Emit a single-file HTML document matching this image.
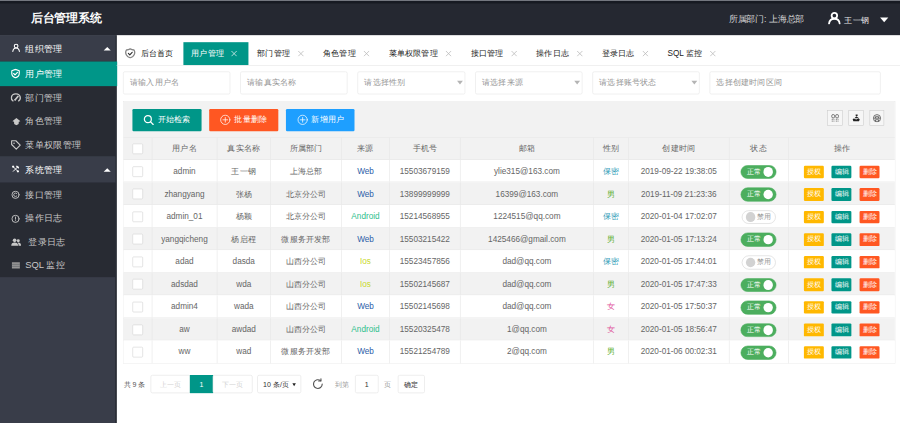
<!DOCTYPE html>
<html lang="zh">
<head>
<meta charset="utf-8">
<title>后台管理系统</title>
<style>
*{box-sizing:border-box;margin:0;padding:0}
html,body{width:900px;height:423px;overflow:hidden;background:#fff}
body{font-family:"Liberation Sans",sans-serif;font-size:14px;color:#333;position:relative}
#app{position:absolute;left:0;top:0;width:1536px;height:722px;transform:scale(0.5859375);transform-origin:0 0;overflow:hidden;background:#fff}
a{text-decoration:none;color:inherit}
i,em{font-style:normal}
svg{display:block}
/* header */
.hd{position:absolute;left:0;top:0;width:1536px;height:60px;background:linear-gradient(to bottom,#74777f 0,#74777f 1.5px,#171a22 2.2px,#171a22 5px,#252831 7px,#252831 100%);color:#fff}
.logo{position:absolute;left:53px;top:0;height:60px;line-height:63px;font-size:20px;font-weight:bold;color:#fff;white-space:nowrap}
.dept{position:absolute;left:1244px;top:0;line-height:66px;font-size:15px;color:#d4d4d4;white-space:nowrap}
.uic{position:absolute;left:1413px;top:19.5px;width:22px;height:22px}
.uname{position:absolute;left:1441px;top:0;line-height:70px;font-size:14px;color:#e8e8e8;white-space:nowrap}
.ucar{position:absolute;left:1501.5px;top:29.5px;width:0;height:0;border:7.3px solid transparent;border-top:8px solid #fff;border-bottom-width:0}
/* side */
.side{position:absolute;left:0;top:60px;width:198.7px;height:662px;background:#393d49;border-right:2px solid #20232a;color:#c2c2c2;font-size:16px}
.side .g{position:relative;height:45px;line-height:47px;color:#fff;background:#393d49;border-bottom:1.5px solid #2b2e37}
.side .it{position:relative;height:40px;line-height:40px;color:#c8c8c8}
.side .grp .it:first-child{height:41.5px;line-height:41.5px}
.side .grp{background:#282b33}
.side .it.on{background:#009688;color:#fff;margin-right:-3.2px}
.side .t{position:absolute;left:43px;top:0;white-space:nowrap}
.side .ic{position:absolute;left:19px;top:50%;width:16px;height:16px;margin-top:-8px}
.side .car{position:absolute;left:177px;top:20px;width:0;height:0;border:6.5px solid transparent;border-bottom-color:#fff;border-top-width:0}
/* tabs */
.tabs{position:absolute;left:199px;top:72.4px;width:1337px;height:39.6px;border-bottom:1px solid #e6e6e6;white-space:nowrap;font-size:14px;color:#222}
.tab{position:absolute;top:0;height:38.6px;line-height:38.6px;white-space:nowrap}
.tab.on{background:#009688;color:#fff}
.tab .x{position:absolute;top:13.8px;width:11px;height:11px;stroke:#b8b8b8}
.tab.on .x{stroke:#e6f5f3}
/* inputs */
.inp{position:absolute;top:121.5px;height:39.4px;border:1px solid #e6e6e6;border-radius:3px;background:#fff;line-height:34.4px;padding-left:11px;color:#959595;font-size:14px;white-space:nowrap}
.inp .dn{position:absolute;right:2.6px;top:15.8px;width:0;height:0;border:5.6px solid transparent;border-top:6.2px solid #b4b4b4;border-bottom-width:0}
/* table */
.tbl{position:absolute;left:210.4px;top:173.3px;width:1317.2px;border:1px solid #e9e9e9;background:#fff}
.tool{position:relative;height:60.3px;background:#f2f2f2;border-bottom:1px solid #e6e6e6}
.btn{position:absolute;top:11.9px;height:38px;line-height:38px;color:#fff;font-size:14px;border-radius:2px;white-space:nowrap}
.btn span{position:absolute;top:-1.6px;left:43px}
.btn svg{position:absolute;left:18.5px;top:9px;width:19px;height:19px}
.tic{position:absolute;top:14.2px;width:25.8px;height:26.2px;border:1px solid #ccc;background:#f6f6f6}
.tr{display:flex;height:38.55px;border-bottom:1px solid #e6e6e6;background:#fff}
.tr.ev{background:#f2f2f2}
.tr.th{background:#f2f2f2;height:38.3px}
.tr:last-child{border-bottom:none}
.c{flex:none;height:100%;padding-top:1.2px;border-right:1px solid #e6e6e6;text-align:center;line-height:37.5px;color:#666;font-size:14px;white-space:nowrap;overflow:hidden;position:relative}
.c:last-child{border-right:none}
.th .c{padding-top:.7px}
.chk{display:inline-block;width:18px;height:18px;border:1px solid #d2d2d2;border-radius:2px;background:#fff;vertical-align:middle;position:relative;top:-.7px}
.sw{display:inline-block;position:relative;width:58px;height:23.5px;border-radius:12px;border:1px solid #d2d2d2;background:#fff;vertical-align:middle;top:.2px}
.sw em{position:absolute;top:0;line-height:21.5px;font-size:12px;color:#999;right:6.5px}
.sw i{position:absolute;top:2.5px;left:6px;width:16.5px;height:16.5px;border-radius:50%;background:#d2d2d2}
.sw.on{background:#4cae5e;border-color:#4cae5e;width:61px}
.sw.on em{color:#fff;left:10px;right:auto}
.sw.on i{background:#fff;left:auto;right:5px}
.xb{display:inline-block;height:21.5px;line-height:21.5px;width:34px;color:#fff;font-size:12px;border-radius:2px;vertical-align:middle;margin:0 6.8px;position:relative;top:-.1px;left:-.6px}
/* page */
.pg{position:absolute;top:640.2px;height:31px;font-size:12px;color:#333;white-space:nowrap}
.pg div,.pg span{position:absolute;top:0;height:31px;line-height:32px;text-align:center}
.pg .bx{border:1px solid #e2e2e2;background:#fff;border-radius:3px}
</style>
</head>
<body>
<div id="app">
  <div class="hd">
    <div class="logo">后台管理系统</div>
    <div class="dept">所属部门: 上海总部</div>
    <svg class="uic" viewBox="0 0 22 22" fill="none" stroke="#fff" stroke-width="3.1" stroke-linecap="round"><circle cx="11" cy="6.6" r="4.700"/><path d="M1.900 20.300c0.600-5.400 4.200-8.300 9.100-8.300s8.500 2.900 9.100 8.300"/></svg>
    <div class="uname">王一钢</div>
    <div class="ucar"></div>
  </div>

  <div class="side">
    <div class="g"><svg class="ic" style="width:15px;height:15px;margin-top:-8px;left:19.5px" viewBox="0 0 24 24" fill="none" stroke="#fff" stroke-width="3" stroke-linecap="round"><circle cx="12" cy="7.5" r="5"/><path d="M3 22c0.800-5.800 4.400-9.200 9-9.200s8.200 3.400 9 9.200"/></svg><span class="t">组织管理</span><span class="car"></span></div>
    <div class="grp">
    <div class="it on"><svg class="ic" style="width:17px;height:17px;margin-top:-8.5px;left:18px" viewBox="0 0 24 24" fill="none" stroke="#fff" stroke-width="2.800" stroke-linejoin="round" stroke-linecap="round"><path d="M12 2l9 3.200v6.800c0 5.400-3.800 8.600-9 10.400c-5.200-1.800-9-5-9-10.400v-6.800z"/><path d="M7.500 12l3.300 3.300l5.800-6"/></svg><span class="t">用户管理</span></div>
    <div class="it"><svg class="ic" style="width:18px;height:16px;margin-top:-8.5px;left:18px" viewBox="0 0 24 21" fill="none" stroke="#c8c8c8" stroke-width="3.200" stroke-linecap="round"><path d="M5.500 18.500c-2.400-1.400-3.700-3.800-3.700-6.500c0-5.200 4.500-9.200 10.200-9.200s10.200 4 10.200 9.200c0 2.700-1.300 5.100-3.700 6.500"/><path d="M11 15.500l6-7" stroke-width="3.600"/><circle cx="10.500" cy="16" r="2.200" fill="#c8c8c8" stroke="none"/></svg><span class="t">部门管理</span></div>
    <div class="it"><svg class="ic" style="width:14px;height:13px;margin-top:-6px;left:20.500px" viewBox="0 0 24 22" fill="#c8c8c8"><path d="M12 0.500l12 9.500l-5 1.500l-0.500 6.500l-6.500 3.500l-6.500-3.500l-0.500-6.500l-5-1.500z"/></svg><span class="t">角色管理</span></div>
    <div class="it"><svg class="ic" style="width:18px;height:18px;margin-top:-8.500px;left:17.500px" viewBox="0 0 24 24" fill="none" stroke="#c8c8c8" stroke-width="2.600" stroke-linejoin="round"><path d="M2.500 3h9.500l10 10l-9 9l-10.500-10.500z"/><circle cx="8" cy="8.500" r="1.800" fill="#c8c8c8" stroke="none"/></svg><span class="t">菜单权限管理</span></div>
    </div>
    <div class="g"><svg class="ic" style="width:13px;height:13px;margin-top:-6.500px;left:20px" viewBox="0 0 24 24" fill="none" stroke="#fff" stroke-width="3" stroke-linecap="round"><path d="M5 5l14 14M19 5l-14 14"/><circle cx="4.500" cy="4.500" r="3.400" fill="#fff" stroke="none"/><circle cx="19.500" cy="19.500" r="3.400" fill="#fff" stroke="none"/><path d="M16 3l5 5" stroke-width="4.500"/></svg><span class="t">系统管理</span><span class="car"></span></div>
    <div class="grp">
    <div class="it"><svg class="ic" style="width:15px;height:15px;margin-top:-7.500px;left:19px" viewBox="0 0 24 24" fill="none" stroke="#c8c8c8" stroke-width="2.500" stroke-linecap="round"><circle cx="12" cy="12" r="9.800"/><path d="M15.500 8.800a4.800 4.800 0 1 0 0 6.400"/></svg><span class="t">接口管理</span></div>
    <div class="it"><svg class="ic" style="width:15px;height:15px;margin-top:-7.500px;left:19px" viewBox="0 0 24 24" fill="none" stroke="#c8c8c8" stroke-width="2.500" stroke-linecap="round"><circle cx="12" cy="12" r="9.800"/><path d="M12 7v6M12 17v0.200"/></svg><span class="t">操作日志</span></div>
    <div class="it"><svg class="ic" style="width:17px;height:14px;margin-top:-7.500px;left:18.500px" viewBox="0 0 30 24" fill="#c8c8c8"><circle cx="10.500" cy="7" r="5.500"/><path d="M0 23c0-6.500 4-9.500 10.500-9.500s10.500 3 10.500 9.500z"/><circle cx="21.500" cy="8" r="4.500"/><path d="M21 13.500c5.500 0 9 2.500 9 9.500h-7.500c0-4.500-1-7-3.500-9z"/></svg><span class="t" style="left:48px">登录日志</span></div>
    <div class="it"><svg class="ic" style="width:14px;height:12px;margin-top:-6px;left:19.500px" viewBox="0 0 24 20" fill="#969696"><path d="M0 1h24v18h-24z"/><path d="M0 6.800h24M0 12.800h24" stroke="#55585f" stroke-width="1.500"/></svg><span class="t">SQL 监控</span></div>
    </div>
  </div>

  <div class="tabs">
    <div class="tab" style="left:0;width:114px"><svg style="position:absolute;left:14.2px;top:9.8px;width:18.5px;height:18px" viewBox="0 0 24 24" fill="none" stroke-linejoin="round" stroke-linecap="round"><path d="M12 1.800c2.600 1.600 5.400 2.400 8.600 2.600c2 3.200 2 7.400 0.400 10.800c-1.600 3.400-4.800 5.800-9 7c-4.200-1.200-7.400-3.600-9-7c-1.600-3.400-1.600-7.600 0.400-10.800c3.200-0.200 6-1 8.600-2.600z" stroke="#858585" stroke-width="3"/><path d="M7.800 12.200l3.200 3.200l5.400-5.800" stroke="#2e2e2e" stroke-width="2.600"/></svg><span style="position:absolute;left:41px">后台首页</span></div>
    <div class="tab on" style="left:114px;width:110.500px"><span style="position:absolute;left:13.3px">用户管理</span><svg class="x" style="left:81.2px" viewBox="0 0 11 11" fill="none" stroke-width="1.3"><path d="M1 1l9 9M10 1l-9 9"/></svg></div>
    <div class="tab" style="left:224.500px;width:112px"><span style="position:absolute;left:15.6px">部门管理</span><svg class="x" style="left:84.2px" viewBox="0 0 11 11" fill="none" stroke-width="1.3"><path d="M1 1l9 9M10 1l-9 9"/></svg></div>
    <div class="tab" style="left:336.500px;width:112px"><span style="position:absolute;left:15.6px">角色管理</span><svg class="x" style="left:84.2px" viewBox="0 0 11 11" fill="none" stroke-width="1.3"><path d="M1 1l9 9M10 1l-9 9"/></svg></div>
    <div class="tab" style="left:448.500px;width:140px"><span style="position:absolute;left:15.6px">菜单权限管理</span><svg class="x" style="left:112.2px" viewBox="0 0 11 11" fill="none" stroke-width="1.3"><path d="M1 1l9 9M10 1l-9 9"/></svg></div>
    <div class="tab" style="left:588.500px;width:112px"><span style="position:absolute;left:15.6px">接口管理</span><svg class="x" style="left:84.2px" viewBox="0 0 11 11" fill="none" stroke-width="1.3"><path d="M1 1l9 9M10 1l-9 9"/></svg></div>
    <div class="tab" style="left:700.500px;width:112px"><span style="position:absolute;left:15.6px">操作日志</span><svg class="x" style="left:84.2px" viewBox="0 0 11 11" fill="none" stroke-width="1.3"><path d="M1 1l9 9M10 1l-9 9"/></svg></div>
    <div class="tab" style="left:812.500px;width:112px"><span style="position:absolute;left:15.6px">登录日志</span><svg class="x" style="left:84.2px" viewBox="0 0 11 11" fill="none" stroke-width="1.3"><path d="M1 1l9 9M10 1l-9 9"/></svg></div>
    <div class="tab" style="left:924.500px;width:112px"><span style="position:absolute;left:15.6px">SQL 监控</span><svg class="x" style="left:87.5px" viewBox="0 0 11 11" fill="none" stroke-width="1.3"><path d="M1 1l9 9M10 1l-9 9"/></svg></div>
  </div>

  <div class="inp" style="left:210px;width:182.500px">请输入用户名</div>
  <div class="inp" style="left:410px;width:182.500px">请输真实名称</div>
  <div class="inp" style="left:610px;width:183.500px">请选择性别<i class="dn"></i></div>
  <div class="inp" style="left:810.500px;width:183px">请选择来源<i class="dn"></i></div>
  <div class="inp" style="left:1010.500px;width:183px">请选择账号状态<i class="dn"></i></div>
  <div class="inp" style="left:1210.500px;width:292px">选择创建时间区间</div>

  <div class="tbl">
    <div class="tool">
      <a class="btn" style="left:14.500px;width:118px;background:#009688"><svg viewBox="0 0 24 24" fill="none" stroke="#fff" stroke-width="2.600" stroke-linecap="round"><circle cx="10.500" cy="10.500" r="7.500"/><path d="M16 16l6 6"/></svg><span>开始检索</span></a>
      <a class="btn" style="left:145.500px;width:118px;background:#FF5722"><svg viewBox="0 0 24 24" fill="none" stroke="#fff" stroke-width="1.600" stroke-linecap="round"><circle cx="12" cy="12" r="10"/><path d="M12 7v10M7 12h10"/></svg><span>批量删除</span></a>
      <a class="btn" style="left:277px;width:117px;background:#1E9FFF"><svg viewBox="0 0 24 24" fill="none" stroke="#fff" stroke-width="1.600" stroke-linecap="round"><circle cx="12" cy="12" r="10"/><path d="M12 7v10M7 12h10"/></svg><span>新增用户</span></a>
      <div class="tic" style="left:1200.5px"><svg style="position:absolute;left:5px;top:5px;width:14.500px;height:14.500px" viewBox="0 0 24 24" fill="none" stroke="#555" stroke-width="2.200"><rect x="2.500" y="2.500" width="8" height="9.500" rx="3.500"/><rect x="13.500" y="2.500" width="8" height="9.500" rx="3.500"/><path d="M2.500 16h7.500M14 16h7.500M2.500 21h7.500M14 21h7.500" stroke-dasharray="3 2"/></svg></div>
      <div class="tic" style="left:1236.5px"><svg style="position:absolute;left:5px;top:5px;width:14.500px;height:14.500px" viewBox="0 0 24 24" fill="#222"><path d="M10.500 2.500h5.500v4h-5.500zM12.500 7l7.500 6h-13zM2 15.500l3-2l7 3l7-3l3 2l-2 6h-16z"/></svg></div>
      <div class="tic" style="left:1272.3px"><svg style="position:absolute;left:4.500px;top:4.500px;width:15.500px;height:15.500px" viewBox="0 0 24 24" fill="none" stroke="#555" stroke-width="2.200"><circle cx="12" cy="12" r="9.500"/><path d="M4 12h16M8 12v-4h8v4M8 21v-5h8v5"/></svg></div>
    </div>
    <div class="tr th"><div class="c" style="width:48.47px"><span class="chk"></span></div><div class="c" style="width:110.93px">用户名</div><div class="c" style="width:91.48px">真实名称</div><div class="c" style="width:121.17px">所属部门</div><div class="c" style="width:81.75px">来源</div><div class="c" style="width:120.83px">手机号</div><div class="c" style="width:227.50px">邮箱</div><div class="c" style="width:59.73px">性别</div><div class="c" style="width:171.35px">创建时间</div><div class="c" style="width:101.21px">状态</div><div class="c" style="width:182.61px">操作</div></div>
    <div class="tr"><div class="c" style="width:48.47px"><span class="chk"></span></div><div class="c" style="width:110.93px">admin</div><div class="c" style="width:91.48px">王一钢</div><div class="c" style="width:121.17px">上海总部</div><div class="c" style="width:81.75px"><span style="color:#2c5ea8">Web</span></div><div class="c" style="width:120.83px">15503679159</div><div class="c" style="width:227.50px">ylie315@163.com</div><div class="c" style="width:59.73px"><span style="color:#2f9db8">保密</span></div><div class="c" style="width:171.35px">2019-09-22 19:38:05</div><div class="c" style="width:101.21px"><span class="sw on"><em>正常</em><i></i></span></div><div class="c" style="width:182.61px"><a class="xb" style="background:#FFB800">授权</a><a class="xb" style="background:#009688">编辑</a><a class="xb" style="background:#FF5722">删除</a></div></div>
<div class="tr ev"><div class="c" style="width:48.47px"><span class="chk"></span></div><div class="c" style="width:110.93px">zhangyang</div><div class="c" style="width:91.48px">张杨</div><div class="c" style="width:121.17px">北京分公司</div><div class="c" style="width:81.75px"><span style="color:#2c5ea8">Web</span></div><div class="c" style="width:120.83px">13899999999</div><div class="c" style="width:227.50px">16399@163.com</div><div class="c" style="width:59.73px"><span style="color:#5db030">男</span></div><div class="c" style="width:171.35px">2019-11-09 21:23:36</div><div class="c" style="width:101.21px"><span class="sw on"><em>正常</em><i></i></span></div><div class="c" style="width:182.61px"><a class="xb" style="background:#FFB800">授权</a><a class="xb" style="background:#009688">编辑</a><a class="xb" style="background:#FF5722">删除</a></div></div>
<div class="tr"><div class="c" style="width:48.47px"><span class="chk"></span></div><div class="c" style="width:110.93px">admin_01</div><div class="c" style="width:91.48px">杨颖</div><div class="c" style="width:121.17px">北京分公司</div><div class="c" style="width:81.75px"><span style="color:#2fc08d">Android</span></div><div class="c" style="width:120.83px">15214568955</div><div class="c" style="width:227.50px">1224515@qq.com</div><div class="c" style="width:59.73px"><span style="color:#2f9db8">保密</span></div><div class="c" style="width:171.35px">2020-01-04 17:02:07</div><div class="c" style="width:101.21px"><span class="sw"><i></i><em>禁用</em></span></div><div class="c" style="width:182.61px"><a class="xb" style="background:#FFB800">授权</a><a class="xb" style="background:#009688">编辑</a><a class="xb" style="background:#FF5722">删除</a></div></div>
<div class="tr ev"><div class="c" style="width:48.47px"><span class="chk"></span></div><div class="c" style="width:110.93px">yangqicheng</div><div class="c" style="width:91.48px">杨启程</div><div class="c" style="width:121.17px">微服务开发部</div><div class="c" style="width:81.75px"><span style="color:#2c5ea8">Web</span></div><div class="c" style="width:120.83px">15503215422</div><div class="c" style="width:227.50px">1425466@gmail.com</div><div class="c" style="width:59.73px"><span style="color:#5db030">男</span></div><div class="c" style="width:171.35px">2020-01-05 17:13:24</div><div class="c" style="width:101.21px"><span class="sw on"><em>正常</em><i></i></span></div><div class="c" style="width:182.61px"><a class="xb" style="background:#FFB800">授权</a><a class="xb" style="background:#009688">编辑</a><a class="xb" style="background:#FF5722">删除</a></div></div>
<div class="tr"><div class="c" style="width:48.47px"><span class="chk"></span></div><div class="c" style="width:110.93px">adad</div><div class="c" style="width:91.48px">dasda</div><div class="c" style="width:121.17px">山西分公司</div><div class="c" style="width:81.75px"><span style="color:#c9d92f">Ios</span></div><div class="c" style="width:120.83px">15523457856</div><div class="c" style="width:227.50px">dad@qq.com</div><div class="c" style="width:59.73px"><span style="color:#2f9db8">保密</span></div><div class="c" style="width:171.35px">2020-01-05 17:44:01</div><div class="c" style="width:101.21px"><span class="sw"><i></i><em>禁用</em></span></div><div class="c" style="width:182.61px"><a class="xb" style="background:#FFB800">授权</a><a class="xb" style="background:#009688">编辑</a><a class="xb" style="background:#FF5722">删除</a></div></div>
<div class="tr ev"><div class="c" style="width:48.47px"><span class="chk"></span></div><div class="c" style="width:110.93px">adsdad</div><div class="c" style="width:91.48px">wda</div><div class="c" style="width:121.17px">山西分公司</div><div class="c" style="width:81.75px"><span style="color:#c9d92f">Ios</span></div><div class="c" style="width:120.83px">15502145687</div><div class="c" style="width:227.50px">dad@qq.com</div><div class="c" style="width:59.73px"><span style="color:#5db030">男</span></div><div class="c" style="width:171.35px">2020-01-05 17:47:33</div><div class="c" style="width:101.21px"><span class="sw on"><em>正常</em><i></i></span></div><div class="c" style="width:182.61px"><a class="xb" style="background:#FFB800">授权</a><a class="xb" style="background:#009688">编辑</a><a class="xb" style="background:#FF5722">删除</a></div></div>
<div class="tr"><div class="c" style="width:48.47px"><span class="chk"></span></div><div class="c" style="width:110.93px">admin4</div><div class="c" style="width:91.48px">wada</div><div class="c" style="width:121.17px">山西分公司</div><div class="c" style="width:81.75px"><span style="color:#2c5ea8">Web</span></div><div class="c" style="width:120.83px">15502145698</div><div class="c" style="width:227.50px">dad@qq.com</div><div class="c" style="width:59.73px"><span style="color:#e0529a">女</span></div><div class="c" style="width:171.35px">2020-01-05 17:50:37</div><div class="c" style="width:101.21px"><span class="sw on"><em>正常</em><i></i></span></div><div class="c" style="width:182.61px"><a class="xb" style="background:#FFB800">授权</a><a class="xb" style="background:#009688">编辑</a><a class="xb" style="background:#FF5722">删除</a></div></div>
<div class="tr ev"><div class="c" style="width:48.47px"><span class="chk"></span></div><div class="c" style="width:110.93px">aw</div><div class="c" style="width:91.48px">awdad</div><div class="c" style="width:121.17px">山西分公司</div><div class="c" style="width:81.75px"><span style="color:#2fc08d">Android</span></div><div class="c" style="width:120.83px">15520325478</div><div class="c" style="width:227.50px">1@qq.com</div><div class="c" style="width:59.73px"><span style="color:#e0529a">女</span></div><div class="c" style="width:171.35px">2020-01-05 18:56:47</div><div class="c" style="width:101.21px"><span class="sw on"><em>正常</em><i></i></span></div><div class="c" style="width:182.61px"><a class="xb" style="background:#FFB800">授权</a><a class="xb" style="background:#009688">编辑</a><a class="xb" style="background:#FF5722">删除</a></div></div>
<div class="tr"><div class="c" style="width:48.47px"><span class="chk"></span></div><div class="c" style="width:110.93px">ww</div><div class="c" style="width:91.48px">wad</div><div class="c" style="width:121.17px">微服务开发部</div><div class="c" style="width:81.75px"><span style="color:#2c5ea8">Web</span></div><div class="c" style="width:120.83px">15521254789</div><div class="c" style="width:227.50px">2@qq.com</div><div class="c" style="width:59.73px"><span style="color:#5db030">男</span></div><div class="c" style="width:171.35px">2020-01-06 00:02:31</div><div class="c" style="width:101.21px"><span class="sw on"><em>正常</em><i></i></span></div><div class="c" style="width:182.61px"><a class="xb" style="background:#FFB800">授权</a><a class="xb" style="background:#009688">编辑</a><a class="xb" style="background:#FF5722">删除</a></div></div>
  </div>

  <div class="pg" style="left:0;width:1536px">
    <span style="left:211px;font-size:12px;color:#555">共 9 条</span>
    <div class="bx" style="left:257px;width:68px;color:#d2d2d2">上一页</div>
    <div style="left:324px;width:39.500px;background:#009688;color:#fff;font-size:12px;line-height:33px">1</div>
    <div class="bx" style="left:362.500px;width:68px;color:#d2d2d2">下一页</div>
    <div class="bx" style="left:439px;width:74.500px;color:#333;text-align:left;padding-left:9px">10 条/页<i style="position:absolute;right:8px;top:12.500px;border:3.500px solid transparent;border-top:5px solid #222;border-bottom:0;width:0;height:0"></i></div>
    <svg style="position:absolute;left:532px;top:5px;width:21px;height:21px" viewBox="0 0 24 24" fill="none" stroke="#555" stroke-width="2.200" stroke-linecap="round"><path d="M20.500 12a8.500 8.500 0 1 1-3-6.500"/><path d="M18 1.500v4.500h-4.500" stroke-linejoin="round"/></svg>
    <span style="left:571px;color:#999">到第</span>
    <div class="bx" style="left:605.500px;width:40.500px;color:#333">1</div>
    <span style="left:656px;color:#999">页</span>
    <div class="bx" style="left:678.500px;width:46px;color:#333">确定</div>
  </div>
</div>
</body>
</html>
